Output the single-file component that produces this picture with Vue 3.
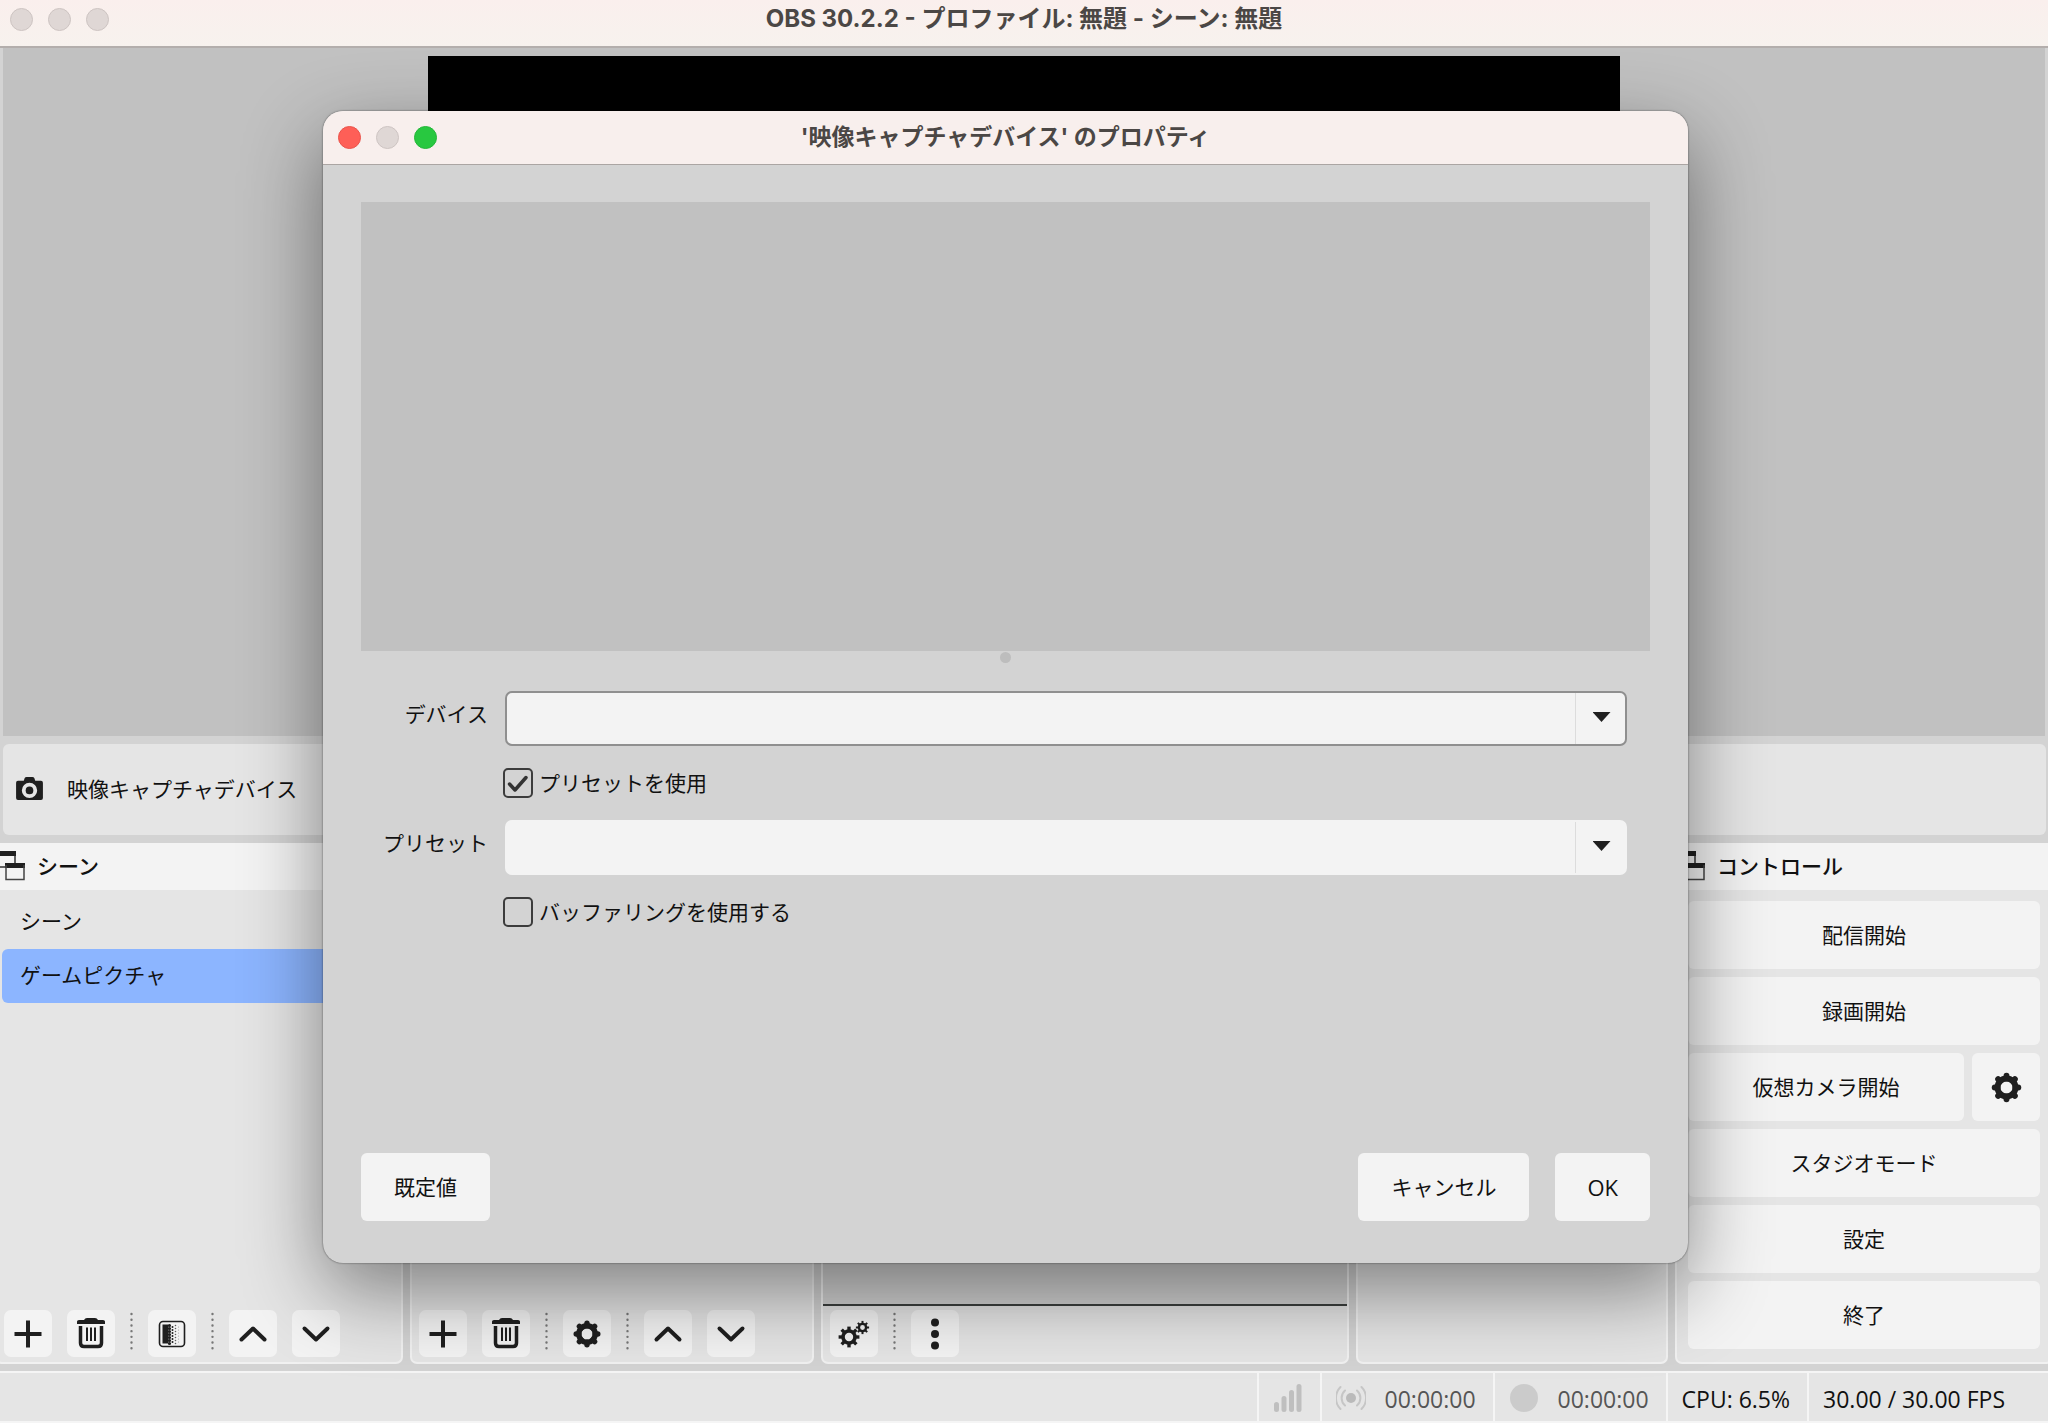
<script setup>
import { ref, h } from 'vue'

const device = ref('')
const preset = ref('')
const usePreset = ref(true)
const useBuffering = ref(false)
const scenes = ['シーン', 'ゲームピクチャ']
const selectedScene = ref('ゲームピクチャ')

const angles = [0, 45, 90, 135, 180, 225, 270, 315]

const gear = (cx, cy, ring, width, tooth, reach) =>
  h('g', { stroke: 'currentColor', fill: 'none' }, [
    h('circle', { cx, cy, r: ring, 'stroke-width': width }),
    ...angles.map((a) =>
      h('path', {
        d: `M${cx} ${cy - ring}V${cy - reach}`,
        'stroke-width': tooth,
        'stroke-linecap': tooth > 4 ? 'round' : 'butt',
        transform: `rotate(${a} ${cx} ${cy})`
      })
    )
  ])

const line = (d, width = 4) =>
  h('path', {
    d,
    fill: 'none',
    stroke: 'currentColor',
    'stroke-width': width,
    'stroke-linecap': 'round',
    'stroke-linejoin': 'round'
  })

const shapes = {
  plus: () => [h('path', { d: 'M14 2.500h4v11.500h11.500v4h-11.500v11.500h-4v-11.500h-11.500v-4h11.500z', fill: 'currentColor' })],
  trash: () => [
    h('path', { d: 'M2 3.500Q2 2 4 2H9Q10 0 12 0H20Q22 0 23 2H28Q30 2 30 3.500V6H2z', fill: 'currentColor' }),
    h('path', { d: 'M5.500 8V25Q5.500 28.500 9 28.500H23Q26.500 28.500 26.500 25V8', fill: 'none', stroke: 'currentColor', 'stroke-width': 3.5 }),
    h('path', { d: 'M12 9.500V23M16 9.500V23M20 9.500V23', stroke: 'currentColor', 'stroke-width': 2 })
  ],
  filter: () => [
    h('rect', { x: 3.5, y: 3.5, width: 25, height: 25, rx: 3.5, fill: 'none', stroke: 'currentColor', 'stroke-width': 1.6 }),
    h('path', { d: 'M6.500 6.500h6v19h-6z', fill: 'currentColor' }),
    h('path', { d: 'M13.500 7.500V26', stroke: 'currentColor', 'stroke-width': 3.2, 'stroke-linecap': 'round', 'stroke-dasharray': '0 3' }),
    h('path', { d: 'M16.500 9V25', stroke: 'currentColor', 'stroke-width': 2, 'stroke-linecap': 'round', 'stroke-dasharray': '0 3' }),
    h('path', { d: 'M19.500 7.500V26', stroke: 'currentColor', 'stroke-width': 1.6, 'stroke-linecap': 'round', 'stroke-dasharray': '0 3', opacity: 0.7 }),
    h('path', { d: 'M22.500 9V25', stroke: 'currentColor', 'stroke-width': 1.2, 'stroke-linecap': 'round', 'stroke-dasharray': '0 3', opacity: 0.4 })
  ],
  up: () => [line('M4.500 21.500L16 10.500L27.500 21.500')],
  down: () => [line('M4.500 10.500L16 21.500L27.500 10.500')],
  gear: () => [gear(16, 16, 8.2, 5.4, 5.4, 10.8)],
  cogs: () => [gear(11, 19, 6, 3.6, 3.4, 10.4), gear(24.5, 9.5, 3.6, 2.4, 2, 6.6)],
  dots: () => [4.5, 16, 27.5].map((cy) => h('circle', { cx: 16, cy, r: 4, fill: 'currentColor' }))
}

const Icon = (props) => h('svg', { viewBox: '0 0 32 32', 'aria-hidden': 'true' }, shapes[props.name]())
Icon.props = ['name']

const sceneTools = [
  { icon: 'plus', label: '追加' },
  { icon: 'trash', label: '削除' },
  null,
  { icon: 'filter', label: 'フィルタ' },
  null,
  { icon: 'up', label: '上へ' },
  { icon: 'down', label: '下へ' }
]
const sourceTools = sceneTools.map((t) => (t && t.icon === 'filter' ? { icon: 'gear', label: 'プロパティ' } : t))
const mixerTools = [{ icon: 'cogs', label: '詳細設定' }, null, { icon: 'dots', label: 'メニュー' }]

const docks = [
  { id: 'scenes', title: 'シーン', grow: 408, tools: sceneTools },
  { id: 'sources', title: '', grow: 404, tools: sourceTools },
  { id: 'mixer', title: '', grow: 528, tools: mixerTools },
  { id: 'transitions', title: '', grow: 312, tools: [] },
  { id: 'controls', title: 'コントロール', grow: 378, tools: [] }
]
</script>

<template>
  <div class="app">
    <header class="titlebar main-titlebar">
      <div class="lights"><i></i><i></i><i></i></div>
      <h1>OBS 30.2.2 - プロファイル: 無題 - シーン: 無題</h1>
    </header>

    <main class="preview"><div class="canvas"></div></main>

    <section class="context">
      <svg class="camera" viewBox="0 0 28 24" aria-hidden="true">
        <path fill-rule="evenodd" fill="#1f1f1f" d="M2 4h6l1-3q.5-1 2-1h6q1.500 0 2 1l1 3h6q2 0 2 2v16q0 2-2 2H2q-2 0-2-2V6q0-2 2-2zM14 6a8 8 0 1 0 0 16a8 8 0 1 0 0-16z" />
        <circle cx="14" cy="14" r="4" fill="#1f1f1f" />
      </svg>
      <span>映像キャプチャデバイス</span>
    </section>

    <div class="docks">
      <section v-for="dock in docks" :key="dock.id" class="dock" :style="{ flexGrow: dock.grow }">
        <h2 class="dock-head">
          <svg v-if="dock.title" class="float-icon" viewBox="0 0 30 30" aria-hidden="true">
            <path d="M1 2v14h9M20 1v14" fill="none" stroke="#333" stroke-width="1.500" />
            <path d="M0 0h21v5H0zM10 12h20v5H10z" fill="#1f1f1f" />
            <path d="M11 14v14.500h18V14" fill="none" stroke="#444" stroke-width="1.500" />
          </svg>
          {{ dock.title }}
        </h2>
        <div class="dock-body" :class="dock.id">
          <ul v-if="dock.id === 'scenes'" class="scene-list">
            <li v-for="s in scenes" :key="s" :class="{ selected: s === selectedScene }" @click="selectedScene = s">{{ s }}</li>
          </ul>
          <div v-if="dock.id === 'mixer'" class="mixer-area"></div>
          <div v-if="dock.id === 'controls'" class="control-list">
            <button type="button" class="btn">配信開始</button>
            <button type="button" class="btn">録画開始</button>
            <div class="camera-row">
              <button type="button" class="btn">仮想カメラ開始</button>
              <button type="button" class="btn square" aria-label="仮想カメラ設定"><Icon name="gear" /></button>
            </div>
            <button type="button" class="btn">スタジオモード</button>
            <button type="button" class="btn">設定</button>
            <button type="button" class="btn">終了</button>
          </div>
          <div v-if="dock.tools.length" class="toolbar">
            <template v-for="(t, i) in dock.tools" :key="i">
              <button v-if="t" type="button" class="tool" :aria-label="t.label"><Icon :name="t.icon" /></button>
              <svg v-else class="sep" viewBox="0 0 3 44" aria-hidden="true">
                <path d="M1.500 2V42" pathLength="7" stroke="#777" stroke-width="2.400" stroke-linecap="round" stroke-dasharray="0 1" />
              </svg>
            </template>
          </div>
        </div>
      </section>
    </div>

    <footer class="status">
      <div class="cell">
        <svg class="signal" viewBox="0 0 28 28" aria-hidden="true">
          <path d="M2.500 20.500V25.500M10 14.500V25.500M17.500 8.500V25.500M25 2.500V25.500" stroke="#bfbfbf" stroke-width="5" stroke-linecap="round" />
        </svg>
      </div>
      <div class="cell dim">
        <svg class="cast" viewBox="0 0 30 28" aria-hidden="true">
          <circle cx="15" cy="14" r="5" fill="#bababa" />
          <path d="M9 6.500a10 10 0 0 0 0 15M21 6.500a10 10 0 0 1 0 15M4.500 3a15.500 15.500 0 0 0 0 22M25.500 3a15.500 15.500 0 0 1 0 22" fill="none" stroke="#c6c6c6" stroke-width="2" stroke-linecap="round" />
        </svg>
        <span>00:00:00</span>
      </div>
      <div class="cell dim">
        <i class="rec"></i>
        <span>00:00:00</span>
      </div>
      <div class="cell">CPU: 6.5%</div>
      <div class="cell fps">30.00 / 30.00 FPS</div>
    </footer>

    <div class="dialog" role="dialog" aria-labelledby="dialog-title">
      <header class="titlebar">
        <div class="lights"><i class="close"></i><i></i><i class="zoom"></i></div>
        <h2 id="dialog-title">'映像キャプチャデバイス' のプロパティ</h2>
      </header>
      <div class="dialog-body">
        <div class="source-preview"></div>
        <div class="handle"></div>
        <form class="form" @submit.prevent>
          <label class="field-label" for="device">デバイス</label>
          <div class="combo focused">
            <select id="device" v-model="device"></select>
            <span class="arrow"></span>
          </div>
          <div class="check">
            <span class="box">
              <input id="use-preset" v-model="usePreset" type="checkbox" />
              <svg v-if="usePreset" viewBox="0 0 30 30" aria-hidden="true">
                <path d="M6.500 16L12 22L23 9.500" fill="none" stroke="#333" stroke-width="3.500" stroke-linecap="round" stroke-linejoin="round" />
              </svg>
            </span>
            <label for="use-preset">プリセットを使用</label>
          </div>
          <label class="field-label" for="preset">プリセット</label>
          <div class="combo">
            <select id="preset" v-model="preset"></select>
            <span class="arrow"></span>
          </div>
          <div class="check">
            <span class="box">
              <input id="use-buffering" v-model="useBuffering" type="checkbox" />
            </span>
            <label for="use-buffering">バッファリングを使用する</label>
          </div>
        </form>
        <div class="actions">
          <button type="button" class="btn">既定値</button>
          <span class="spacer"></span>
          <button type="button" class="btn">キャンセル</button>
          <button type="button" class="btn ok">OK</button>
        </div>
      </div>
    </div>
  </div>
</template>

<style>
body {
  margin: 0;
}
</style>

<style scoped>
.app,
.app * {
  box-sizing: border-box;
}
.app {
  position: relative;
  display: flex;
  flex-direction: column;
  min-height: 100vh;
  overflow: hidden;
  background: #d3d3d3;
  color: #111;
  font: 21px/30px "Open Sans", "Noto Sans CJK JP", sans-serif;
}
h1,
h2 {
  margin: 0;
  font-weight: 400;
}
.btn,
.tool,
select {
  border: 0;
  color: inherit;
  font: inherit;
}

/* window title bars */
.titlebar {
  display: grid;
  grid-template-columns: 1fr auto 1fr;
  align-items: center;
  height: 54px;
  padding: 0 15px;
  border-bottom: 1px solid #aba5a3;
  background: #f8efed;
}
.titlebar h1,
.titlebar h2 {
  padding-bottom: 2px;
  color: #4b4745;
  font: 700 23px/32px Inter, "Noto Sans CJK JP", sans-serif;
}
.titlebar h1 {
  font-size: 24px;
}
.main-titlebar {
  height: 48px;
  padding: 0 10px 7px;
  border-bottom: 2px solid #b3aeac;
  background: linear-gradient(#faefed, #f7f2ee);
}
.lights {
  display: flex;
  gap: 15px;
}
.lights i {
  width: 23px;
  height: 23px;
  border: 1px solid #cdc4c2;
  border-radius: 50%;
  background: #dfd7d5;
}
.lights .close {
  border-color: #e9544b;
  background: #fe5f57;
}
.lights .zoom {
  border-color: #24b739;
  background: #28c840;
}

/* main window */
.preview {
  display: flex;
  flex: 1;
  justify-content: center;
  margin: 0 3px;
  padding-top: 8px;
  background: #c1c1c1;
}
.canvas {
  width: 58.400%;
  background: #000;
}
.context {
  display: flex;
  align-items: center;
  gap: 24px;
  height: 91px;
  margin: 8px 2px 8px 3px;
  padding: 0 13px 2px;
  border-radius: 6px;
  background: #e5e5e5;
}
.camera {
  width: 27px;
  height: 23px;
}
.docks {
  display: flex;
  gap: 7px;
  margin: 0 -5px;
}
.dock {
  display: flex;
  flex: 1 1 0;
  flex-direction: column;
  min-width: 0;
}
.dock-head {
  display: flex;
  align-items: center;
  gap: 12px;
  height: 47px;
  padding-bottom: 2px;
  background: #f3f3f3;
  font-size: 21px;
  font-weight: 500;
}
.float-icon {
  width: 30px;
  height: 30px;
}
.dock-body {
  display: flex;
  flex: 1;
  flex-direction: column;
  border: 2px solid #f1f1f1;
  border-top: 0;
  border-radius: 0 0 7px 7px;
  background: #e5e5e5;
}
.scene-list {
  margin: 0;
  padding: 5px 5px 0;
  list-style: none;
}
.scene-list li {
  padding: 11px 18px 13px;
  border-radius: 6px;
  line-height: 30px;
}
.scene-list .selected {
  background: #8cb5ff;
}
.toolbar {
  display: flex;
  align-items: center;
  gap: 15px;
  margin-top: auto;
  padding: 4px 7px 5px;
}
.tool {
  display: grid;
  place-items: center;
  width: 48px;
  height: 47px;
  padding: 0;
  border-radius: 7px;
  background: #f3f3f3;
  color: #1f1f1f;
}
.tool svg {
  width: 32px;
  height: 32px;
}
.sep {
  width: 3px;
  height: 44px;
}
.mixer-area {
  flex: 1;
  border-bottom: 2px solid #3c403f;
  background: #d3d3d3;
}
.control-list {
  display: flex;
  flex-direction: column;
  gap: 8px;
  padding: 11px 11px 13px;
}
.camera-row {
  display: flex;
  gap: 8px;
}
.btn {
  height: 68px;
  padding: 0 27px;
  border-radius: 6px;
  background: #f3f3f3;
}
.camera-row .btn {
  flex: 1;
}
.camera-row .square {
  display: grid;
  flex: 0 0 68px;
  place-items: center;
  padding: 0;
  color: #1f1f1f;
}
.square svg {
  width: 35px;
  height: 35px;
}

/* status bar */
.status {
  display: flex;
  justify-content: flex-end;
  height: 52px;
  margin-top: 7px;
  border: solid #f5f5f5;
  border-width: 2px 0;
  background: #e5e5e5;
  font-size: 23px;
}
.cell {
  display: flex;
  align-items: center;
  gap: 19px;
  padding: 4px 17px 0 14px;
  border-left: 2px solid #f5f5f5;
  white-space: nowrap;
}
.dim {
  color: #555;
}
.fps {
  padding-right: 43px;
}
.signal,
.cast,
.rec {
  width: 30px;
  height: 28px;
  margin-bottom: 2px;
}
.rec {
  width: 28px;
  margin-right: 1px;
  margin-left: 1px;
  border-radius: 50%;
  background: #cbcbcb;
}

/* properties dialog */
.dialog {
  position: absolute;
  inset: 111px 360px 160px 323px;
  display: flex;
  flex-direction: column;
  overflow: hidden;
  border-radius: 20px;
  background: #d3d3d3;
  box-shadow: 0 0 2px rgba(0, 0, 0, 0.6), 0 28px 80px rgba(0, 0, 0, 0.45);
}
.dialog-body {
  display: flex;
  flex: 1;
  flex-direction: column;
  padding: 37px 38px 42px;
}
.source-preview {
  height: 449px;
  background: #c1c1c1;
}
.handle {
  width: 11px;
  height: 11px;
  margin: 1px auto;
  border-radius: 50%;
  background: #bdbdbd;
}
.form {
  display: grid;
  grid-template-columns: 127px 1fr;
  gap: 22px 17px;
  margin-top: 27px;
  padding-right: 23px;
}
.field-label {
  padding-top: 8px;
  text-align: right;
}
.combo {
  display: grid;
  height: 55px;
}
.combo > * {
  grid-area: 1 / 1;
}
.combo select {
  width: 100%;
  border: 2px solid #f3f3f3;
  border-radius: 7px;
  background: #f3f3f3;
  appearance: none;
}
.focused select {
  border-color: #8f8f8f;
}
.arrow {
  display: grid;
  justify-self: end;
  place-items: center;
  width: 52px;
  margin: 2px 0;
  padding-bottom: 3px;
  border-left: 1px solid #dcdcdc;
  pointer-events: none;
}
.arrow::after {
  width: 18px;
  height: 10px;
  background: #1f1f1f;
  clip-path: polygon(0 0, 100% 0, 50% 100%);
  content: "";
}
.check {
  display: flex;
  grid-column: 2;
  align-items: center;
  gap: 6px;
  margin-left: -2px;
}
.box {
  display: grid;
}
.box > * {
  grid-area: 1 / 1;
  width: 30px;
  height: 30px;
  margin: 0;
}
.box input {
  border: 2px solid #3c3c3c;
  border-radius: 5px;
  appearance: none;
}
.box svg {
  pointer-events: none;
}
.actions {
  display: flex;
  gap: 26px;
  margin-top: auto;
}
.actions .btn {
  padding: 0 33px;
}
.actions .ok {
  padding: 0 32px;
  font-size: 22px;
}
.spacer {
  flex: 1;
}
</style>
